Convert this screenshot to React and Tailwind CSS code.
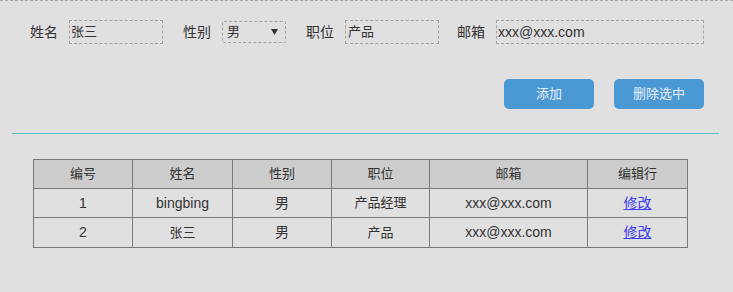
import React from "react";

export default function App() {
  const rows = [
    ["1", "bingbing", "男", "产品经理", "xxx@xxx.com"],
    ["2", "张三", "男", "产品", "xxx@xxx.com"],
  ];
  return (
    <div
      className="w-[733px] h-[292px] bg-[#e0e0e0] border-t border-dashed border-[#a8a8a8] text-[#333] overflow-hidden font-['Liberation_Sans','Noto_Sans_CJK_SC',sans-serif]"
    >
      {/* form row */}
      <div className="flex items-center mt-[19px] pl-[30px] h-[24px] text-[14px]">
        <span className="w-[28px] leading-none">姓名</span>
        <div className="ml-[11px] w-[94px] h-[24px] border border-dashed border-[#a4a4a4] flex items-center pl-[1px] text-[13px]">张三</div>
        <span className="ml-[20px] w-[28px] leading-none">性别</span>
        <div className="ml-[11px] w-[64px] h-[22px] border border-dashed border-[#a4a4a4] rounded-[2px] flex items-center justify-between pl-[4px] pr-[7px] text-[13px]">
          <span>男</span>
          <svg width="7" height="6" viewBox="0 0 7 6"><path d="M0 0 H7 L3.5 6 Z" fill="#333" /></svg>
        </div>
        <span className="ml-[20px] w-[28px] leading-none">职位</span>
        <div className="ml-[11px] w-[94px] h-[24px] border border-dashed border-[#a4a4a4] flex items-center pl-[2px] text-[13px]">产品</div>
        <span className="ml-[18px] w-[28px] leading-none">邮箱</span>
        <div className="ml-[11px] w-[208px] h-[24px] border border-dashed border-[#a4a4a4] flex items-center pl-[1px] text-[14px]">xxx@xxx.com</div>
      </div>

      {/* buttons */}
      <div className="flex justify-end gap-[20px] mt-[35px] pr-[29px]">
        <button className="w-[90px] h-[30px] rounded-[5px] bg-[#4a98d4] text-[#e8eef4] text-[13px]">添加</button>
        <button className="w-[90px] h-[30px] rounded-[5px] bg-[#4a98d4] text-[#e8eef4] text-[13px]">删除选中</button>
      </div>

      {/* hr */}
      <div className="mt-[24px] ml-[12px] w-[707px] h-px bg-[#5cc0cc]" />

      {/* table */}
      <table className="mt-[25px] ml-[33px] border-collapse border border-[#7a7a7a] text-[13px] text-center table-fixed w-[654px]">
        <colgroup>
          <col className="w-[99px]" />
          <col className="w-[100px]" />
          <col className="w-[99px]" />
          <col className="w-[98px]" />
          <col className="w-[158px]" />
          <col className="w-[100px]" />
        </colgroup>
        <thead>
          <tr className="h-[29px] bg-[#cdcdcd]">
            {["编号", "姓名", "性别", "职位", "邮箱", "编辑行"].map((h) => (
              <th key={h} className="border border-[#7a7a7a] font-normal p-0">{h}</th>
            ))}
          </tr>
        </thead>
        <tbody>
          {rows.map((r, i) => (
            <tr key={i} className={i === 0 ? "h-[29px]" : "h-[30px]"}>
              <td className="border border-[#7a7a7a] p-0 text-[14px]">{r[0]}</td>
              <td className={"border border-[#7a7a7a] p-0 " + (i === 0 ? "text-[14px]" : "text-[13px]")}>{r[1]}</td>
              <td className="border border-[#7a7a7a] p-0 text-[14px]">{r[2]}</td>
              <td className="border border-[#7a7a7a] p-0">{r[3]}</td>
              <td className="border border-[#7a7a7a] p-0 text-[14px]">{r[4]}</td>
              <td className="border border-[#7a7a7a] p-0 text-[14px]">
                <a href="#" className="underline text-[#3c3cf0]">修改</a>
              </td>
            </tr>
          ))}
        </tbody>
      </table>
    </div>
  );
}
